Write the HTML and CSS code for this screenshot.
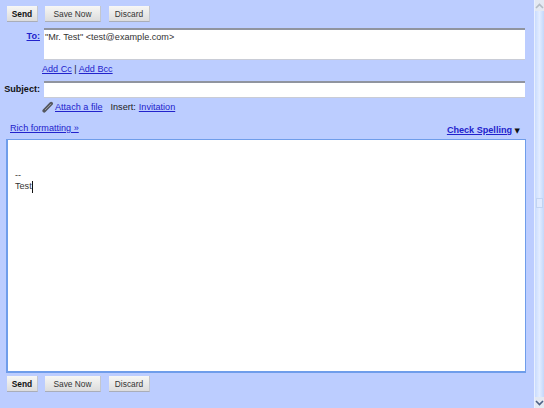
FILE: index.html
```html
<!DOCTYPE html>
<html lang="en">
<head>
<meta charset="utf-8">
<title>Compose</title>
<link rel="stylesheet" href="styles.css">
</head>
<body>
<div class="page">
  <main class="compose">
    <div class="buttons top">
      <button class="btn send">Send</button>
      <button class="btn save">Save Now</button>
      <button class="btn discard">Discard</button>
    </div>
    <div class="row to-row">
      <a class="label link" href="#">To:</a>
      <div class="field to-field">"Mr. Test" &lt;test@example.com&gt;</div>
    </div>
    <div class="sub cc-row"><a href="#">Add Cc</a> | <a href="#">Add Bcc</a></div>
    <div class="row subject-row">
      <span class="label subject">Subject:</span>
      <div class="field subject-field"></div>
    </div>
    <div class="sub attach-row">
      <svg class="clip" width="12" height="12" viewBox="0 0 12 12"><path d="M2.2 9.8 9.2 2.6" stroke="#55585f" stroke-width="3.6" stroke-linecap="round" fill="none"/><path d="M3 9 9 2.9" stroke="#9a9ca4" stroke-width="1" fill="none"/></svg>
      <a href="#">Attach a file</a>
      <span class="insert">Insert:</span>
      <a href="#">Invitation</a>
    </div>
    <div class="tools">
      <a href="#">Rich formatting »</a>
      <span class="spell"><a href="#">Check Spelling</a> <span class="arrow">▼</span></span>
    </div>
    <div class="body-box">
      <div>--</div>
      <div class="sig">Test<span class="caret"></span></div>
    </div>
    <div class="buttons bottom">
      <button class="btn send">Send</button>
      <button class="btn save">Save Now</button>
      <button class="btn discard">Discard</button>
    </div>
  </main>
  <div class="scrollbar">
    <div class="sb-btn"><svg width="9" height="6" viewBox="0 0 9 6"><path d="M1 5 4.5 1.5 8 5" stroke="#b4bcc4" stroke-width="1.6" fill="none"/></svg></div>
    <div class="track"><div class="grip"></div></div>
    <div class="sb-btn"><svg width="9" height="6" viewBox="0 0 9 6"><path d="M1 1 4.5 4.5 8 1" stroke="#4d6185" stroke-width="1.6" fill="none"/></svg></div>
  </div>
</div>
</body>
</html>
```
FILE: styles.css
```css
html, body { margin: 0; padding: 0; }
body { width: 544px; height: 408px; overflow: hidden; font-family: "Liberation Sans", Arial, sans-serif; font-size: 9.1px; color: #222; }
a { color: #2222cc; text-decoration: underline; }
.page { display: flex; width: 544px; height: 408px; background: #bccdff; }
.compose { width: 534px; flex: none; display: flex; flex-direction: column; }
.buttons { display: flex; padding-left: 7px; height: 16px; }
.top { margin-top: 6px; }
.bottom { margin-top: 3px; }
.btn { box-sizing: border-box; height: 16px; padding: 0; border: 0; border-bottom: 1px solid #a9adb8; border-right: 1px solid #c3c6ce; background: linear-gradient(#f7f7f5, #dcdcdc); font: 8.4px "Liberation Sans", Arial, sans-serif; color: #333; }
.send { width: 31px; margin-right: 7px; font-weight: bold; color: #111; }
.save { width: 56px; margin-right: 8px; }
.discard { width: 41px; }
.row { display: flex; align-items: flex-start; }
.label { width: 40px; flex: none; text-align: right; margin-right: 4px; }
.to-row { margin-top: 6px; }
.to-row .label { margin-top: 3px; font-weight: bold; }
.field { box-sizing: border-box; width: 481px; background: #fff; border-top: 2px solid #90949f; border-bottom: 1px solid #c9ccd6; }
.to-field { height: 32px; padding: 1px; line-height: 12px; color: #333; }
.sub { margin-left: 42px; line-height: 13px; }
.cc-row { margin-top: 3px; }
.subject-row { margin-top: 5px; }
.subject { margin-top: 3px; font-weight: bold; color: #111; }
.subject-field { height: 17px; }
.attach-row { margin-top: 2px; display: flex; align-items: center; height: 14px; }
.clip { margin-right: 1px; }
.insert { margin: 0 3px 0 8px; }
.tools { display: flex; justify-content: space-between; align-items: flex-start; margin: 6px 14px 0 10px; height: 19px; line-height: 14px; padding-top: 1px; box-sizing: border-box; }
.spell { margin-top: 2px; }
.spell a { font-weight: bold; }
.arrow { font: 7px "DejaVu Sans", sans-serif; color: #111; }
.body-box { box-sizing: border-box; width: 520px; height: 234px; margin-left: 6px; padding: 30px 7px 0; background: #fff; border: 1px solid #6f9dea; border-bottom-width: 2px; border-left-width: 2px; line-height: 11px; color: #333; }
.sig { display: flex; align-items: stretch; }
.caret { width: 1px; height: 12px; background: #111; }
.scrollbar { width: 10px; flex: none; display: flex; flex-direction: column; background: #d6e4ff; border-left: 1px solid #e9f0ff; box-sizing: border-box; }
.sb-btn { height: 11px; background: #e4e9f2; display: flex; align-items: center; justify-content: center; flex: none; }
.track { flex: 1; display: flex; align-items: center; justify-content: center; background: linear-gradient(90deg, #c9dcff, #e2ecff 50%, #c4d8fb); }
.grip { width: 7px; height: 10px; background: #e0eaff; border: 1px solid #c2d4f2; box-sizing: border-box; margin-top: -2px; }
```
